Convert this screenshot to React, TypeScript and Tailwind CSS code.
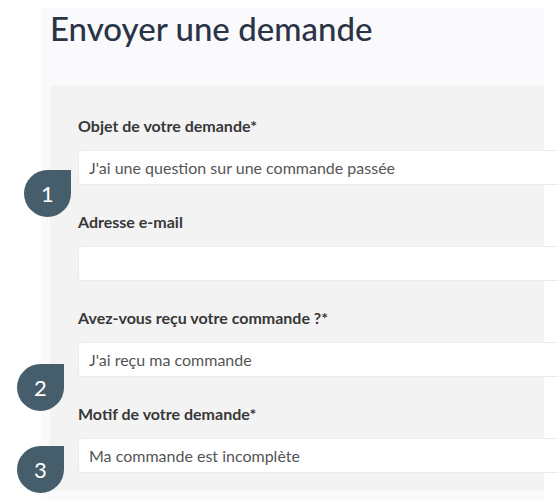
import React from "react";

const fields = [
  { label: "Objet de votre demande*", value: "J'ai une question sur une commande passée" },
  { label: "Adresse e-mail", value: "" },
  { label: "Avez-vous reçu votre commande ?*", value: "J'ai reçu ma commande" },
  { label: "Motif de votre demande*", value: "Ma commande est incomplète" },
];

function Step({ n, className }: { n: number; className: string }) {
  return (
    <div
      className={`absolute flex h-[47px] w-[47px] items-center justify-center rounded-full rounded-tr-none bg-[#465e6c] text-[22px] text-white ${className}`}
    >
      {n}
    </div>
  );
}

export default function App() {
  return (
    <div
      className="relative h-[500px] w-[558px] overflow-hidden bg-white"
      style={{ fontFamily: "Lato, 'Open Sans', sans-serif" }}
    >
      <div className="ml-[41px] mt-[8px] h-[492px] w-[503px] bg-[#fafafd]">
        <h1 className="pl-[9px] text-[33px] leading-[40px] font-medium text-[#2b3446]">
          Envoyer une demande
        </h1>
        <div className="ml-[9px] mt-[37px] flex flex-col gap-[27px] bg-[#f3f3f3] pl-[28px] pt-[31px] pb-[18px]">
          {fields.map((f, i) => (
            <div key={i} className="flex flex-col gap-[14px]">
              <label className="text-[16px] leading-5 font-bold text-[#383838]">
                {f.label}
              </label>
              <div className="flex h-[35px] w-[500px] items-center rounded border border-[#ebebeb] bg-white px-[10px] text-[16px] text-[#555555]">
                {f.value}
              </div>
            </div>
          ))}
        </div>
      </div>
      <Step n={1} className="left-[24px] top-[170px]" />
      <Step n={2} className="left-[17px] top-[364px]" />
      <Step n={3} className="left-[17px] top-[446px]" />
    </div>
  );
}
